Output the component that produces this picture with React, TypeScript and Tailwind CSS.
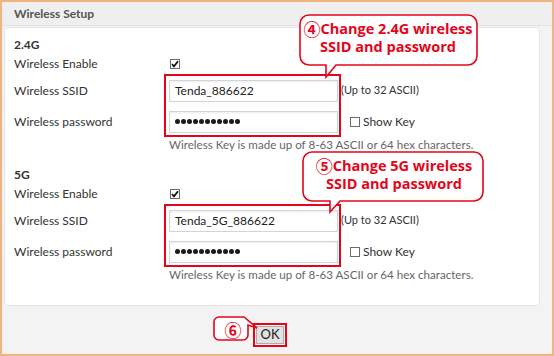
import React from "react";

const RED = "#e3061b";

function CheckBox({ checked }: { checked?: boolean }) {
  return (
    <span className="inline-flex h-[10px] w-[10px] items-center justify-center border border-[#6b6b6b] bg-white">
      {checked && (
        <svg width="8" height="8" viewBox="0 0 8 8">
          <path d="M1 4.2 L3 6.3 L7 1.3" fill="none" stroke="#111" strokeWidth="1.8" />
        </svg>
      )}
    </span>
  );
}

function Dots() {
  return (
    <div className="flex gap-[1px]">
      {Array.from({ length: 11 }).map((_, i) => (
        <span key={i} className="h-[5px] w-[5px] rounded-full bg-[#1a1a1a]" />
      ))}
    </div>
  );
}

function Circled({ ch }: { ch: string }) {
  return (
    <span className="font-['Noto_Sans_CJK_SC',sans-serif] text-[17px] font-bold leading-[18px]">{ch}</span>
  );
}

function Section({ title, ssid }: { title: string; ssid: string }) {
  return (
    <div>
      <div className="h-[19px] text-[12px] font-bold leading-[19px] text-[#333]">{title}</div>
      <div className="flex h-[19px] items-center">
        <div className="w-[155px] text-[12px] text-[#333]">Wireless Enable</div>
        <div className="flex pl-[1px] pt-[1px]"><CheckBox checked /></div>
      </div>
      <div className="relative mt-[2px]">
        <div className="flex h-[31px] items-center">
          <div className="w-[155px] text-[12px] text-[#333]">Wireless SSID</div>
          <div className="flex h-[22px] w-[169px] items-center border border-[#d4d4d4] bg-white pl-[5px] text-[12px] text-[#222] shadow-[inset_0_1px_2px_rgba(0,0,0,0.08)]">
            {ssid}
          </div>
          <div className="ml-[3px] text-[11px] text-[#333]">(Up to 32 ASCII)</div>
        </div>
        <div className="flex h-[31px] items-center">
          <div className="w-[155px] text-[12px] text-[#333]">Wireless password</div>
          <div className="flex h-[22px] w-[169px] items-center border border-[#d4d4d4] bg-white pl-[5px] shadow-[inset_0_1px_2px_rgba(0,0,0,0.08)]">
            <Dots />
          </div>
          <div className="ml-[12px] flex items-center gap-[3px] text-[12px] text-[#333]">
            <CheckBox />
            <span>Show Key</span>
          </div>
        </div>
        <div className="pointer-events-none absolute left-[150px] top-[-1px] h-[63px] w-[177px] border-2 border-[#e3061b]" />
      </div>
      <div className="h-[16px] pl-[155px] text-[11.6px] leading-[16px] text-[#666]">
        Wireless Key is made up of 8-63 ASCII or 64 hex characters.
      </div>
    </div>
  );
}

export default function App() {
  return (
    <div className="relative h-[356px] w-[554px] overflow-hidden border-2 border-[#f0b47e] bg-[#f3f3f3] font-['Lato','Noto_Sans_CJK_SC',sans-serif]">
      <div className="flex h-[24px] items-center border-b border-[#e3e3e3] bg-[#efefef] pl-[12px] text-[12px] font-bold text-[#555]">
        Wireless Setup
      </div>
      <div className="ml-[2px] mr-[12px] mt-[1px] rounded-[4px] border border-[#e6e6e6] bg-white pb-[22px] pl-[9px] pt-[7px]">
        <div className="mb-[12px]">
          <Section title="2.4G" ssid="Tenda_886622" />
        </div>
        <Section title="5G" ssid="Tenda_5G_886622" />
      </div>
      <div className="flex pl-[251px] pt-[17px]">
        <div className="border-2 border-[#e3061b] p-[1px]">
          <div className="flex h-[18px] w-[28px] items-center justify-center border border-[#adadad] bg-[#e1e1e1] text-[13px] text-[#222]">
            OK
          </div>
        </div>
      </div>

      {/* Bubble 1 */}
      <svg className="absolute left-[294px] top-[10px]" width="190" height="70" viewBox="296 12 190 70">
        <path
          d="M309 15 H468 A9 9 0 0 1 477 24 V56 A9 9 0 0 1 468 65 H336 L326 77 V65 H309 A9 9 0 0 1 300 56 V24 A9 9 0 0 1 309 15 Z"
          fill="white"
          stroke={RED}
          strokeWidth="1.6"
        />
      </svg>
      <div className="absolute left-[296px] top-[11px] flex h-[50px] w-[180px] flex-col items-center justify-center font-['Open_Sans',sans-serif] text-[14.5px] font-bold leading-[18px] text-[#e3061b]">
        <span className="flex items-center"><Circled ch="④" />Change 2.4G wireless</span>
        <span>SSID and password</span>
      </div>

      {/* Bubble 2 */}
      <svg className="absolute left-[298px] top-[147px]" width="190" height="70" viewBox="300 149 190 70">
        <path
          d="M312 152 H474 A9 9 0 0 1 483 161 V192 A9 9 0 0 1 474 201 H340 L330 212 V201 H312 A9 9 0 0 1 303 192 V161 A9 9 0 0 1 312 152 Z"
          fill="white"
          stroke={RED}
          strokeWidth="1.6"
        />
      </svg>
      <div className="absolute left-[300px] top-[148px] flex h-[49px] w-[184px] flex-col items-center justify-center font-['Open_Sans',sans-serif] text-[14.5px] font-bold leading-[18px] text-[#e3061b]">
        <span className="flex items-center"><Circled ch="⑤" />Change 5G wireless</span>
        <span>SSID and password</span>
      </div>

      {/* Bubble 3 */}
      <svg className="absolute left-[208px] top-[312px]" width="54" height="32" viewBox="210 314 54 32">
        <path
          d="M219 317 H244 L257 328 L248 325 V335 A5 5 0 0 1 243 340 H219 A5 5 0 0 1 214 335 V322 A5 5 0 0 1 219 317 Z"
          fill="white"
          stroke={RED}
          strokeWidth="1.6"
        />
      </svg>
      <div className="absolute left-[214px] top-[315px] flex h-[26px] w-[34px] items-center justify-center text-[#e3061b]">
        <Circled ch="⑥" />
      </div>
    </div>
  );
}
